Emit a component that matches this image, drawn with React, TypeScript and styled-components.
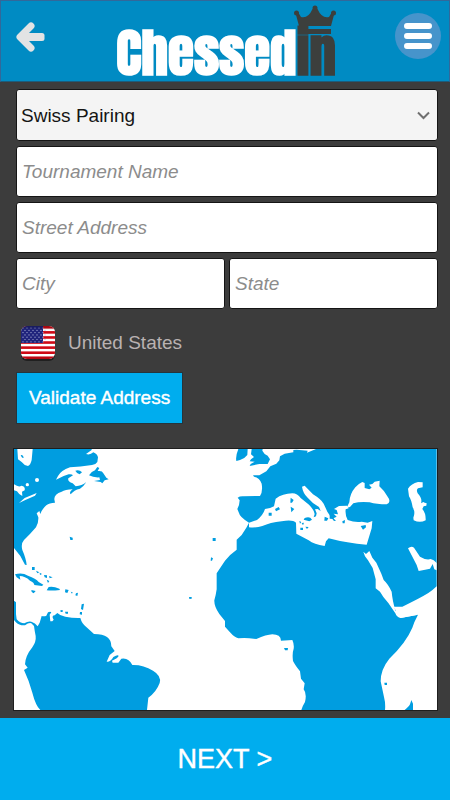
import React from "react";
import styled, { createGlobalStyle } from "styled-components";

const GlobalStyle = createGlobalStyle`
  *, *::before, *::after { box-sizing: border-box; }
  body { margin: 0; background: #3c3c3c; }
  button, input, select { font: inherit; }
`;

const Page = styled.div`
  min-height: 100vh;
  display: flex;
  flex-direction: column;
  background: #3c3c3c;
  font-family: "Liberation Sans", Arial, sans-serif;
  font-size: 19px;
`;

const Header = styled.header`
  display: flex;
  align-items: flex-start;
  justify-content: space-between;
  height: 82px;
  padding: 0 8px 0 12px;
  background: #008bc3;
  border: 1px solid #32689a;
  border-bottom-color: #1c5c7c;
`;

const IconButton = styled.button<{ $round?: boolean }>`
  display: grid;
  place-items: center;
  width: ${(p) => (p.$round ? 46 : 36)}px;
  height: 46px;
  margin-top: ${(p) => (p.$round ? 12 : 13)}px;
  padding: 0;
  border: 0;
  border-radius: ${(p) => (p.$round ? "50%" : "0")};
  background: ${(p) => (p.$round ? "#4694cb" : "transparent")};
  cursor: pointer;
`;

const Brand = styled.div`
  position: relative;
  height: 80px;
  margin-left: 8px;
  padding-top: 12px;
  font-family: Anton, Impact, "Roboto Condensed", sans-serif;
  font-weight: 700;
  font-size: 53px;
  line-height: 80px;
  white-space: nowrap;
  color: #fff;
`;

const BrandTail = styled.span`
  color: #3c3f3d;
`;

const Crown = styled.svg`
  position: absolute;
  top: 4px;
  right: 0;
`;

const Form = styled.form`
  flex: 1;
  display: flex;
  flex-direction: column;
  padding: 7px 12px 7px 16px;
`;

const Fields = styled.div`
  display: grid;
  grid-template-columns: 1fr 1fr;
  gap: 5px 4px;
`;

const fieldBox = `
  width: 100%;
  min-width: 0;
  height: 52px;
  border: 1px solid #151515;
  border-radius: 3px;
`;

const SelectWrap = styled.div`
  grid-column: 1 / -1;
  display: grid;
  align-items: center;

  & > * { grid-area: 1 / 1; }
  & > svg { justify-self: end; margin-right: 8px; pointer-events: none; }
`;

const Select = styled.select`
  ${fieldBox}
  appearance: none;
  padding: 0 32px 0 4px;
  background: #f4f4f4;
  color: #151515;
`;

const Field = styled.input<{ $wide?: boolean }>`
  ${fieldBox}
  height: 51px;
  grid-column: ${(p) => (p.$wide ? "1 / -1" : "auto")};
  padding: 0 5px;
  background: #fff;
  color: #222;

  &::placeholder { color: #8c8c8c; font-style: italic; opacity: 1; }
`;

const Country = styled.div`
  display: flex;
  align-items: center;
  gap: 12px;
  height: 36px;
  margin: 16px 0 11px 4px;
  color: #b9b2b2;
`;

const Validate = styled.button`
  align-self: flex-start;
  height: 52px;
  padding: 0 12px;
  border: 1px solid #26353c;
  background: #00adee;
  color: #fff;
  -webkit-text-stroke: 0.4px #fff;
  cursor: pointer;
`;

const MapFrame = styled.div`
  margin: 24px 0 0 -3px;
  border: 1px solid #1e1e1e;
  background: #fff;

  & > svg { display: block; width: 100%; height: auto; }
`;

const Next = styled.button`
  height: 82px;
  padding: 0;
  border: 0;
  background: #00adee;
  color: #fff;
  font-size: 27px;
  -webkit-text-stroke: 0.4px #fff;
  cursor: pointer;
`;

const LAND = "#009de0";

function Flag() {
  const stars = [];
  for (let r = 0; r < 7; r++) {
    for (let c = 0; c < 6; c++) {
      stars.push(<circle key={`${r}-${c}`} cx={3 + c * 4 + (r % 2) * 2} cy={3 + r * 2.3} r="0.6" fill="#b6bbdc" />);
    }
  }
  return (
    <svg width="36" height="36" viewBox="0 0 36 36" role="img" aria-label="Flag of the United States">
      <defs>
        <clipPath id="flag-shape"><rect x="1" y="1" width="34" height="33" rx="6" /></clipPath>
        <linearGradient id="flag-shade" x1="0" y1="0" x2="0" y2="1">
          <stop offset="0" stopColor="#000" stopOpacity="0.3" />
          <stop offset="0.15" stopColor="#000" stopOpacity="0" />
          <stop offset="0.85" stopColor="#000" stopOpacity="0" />
          <stop offset="1" stopColor="#000" stopOpacity="0.25" />
        </linearGradient>
      </defs>
      <rect x="1" y="3" width="34" height="33" rx="6" fill="#202020" />
      <g clipPath="url(#flag-shape)">
        <rect width="36" height="36" fill="#fff" />
        {[0, 1, 2, 3, 4, 5, 6].map((i) => (
          <rect key={i} y={1 + i * 5.08} width="36" height="2.6" fill="#cf0a16" />
        ))}
        <rect width="23" height="18" fill="#20247c" />
        {stars}
        <rect width="36" height="36" fill="url(#flag-shade)" />
      </g>
    </svg>
  );
}

function WorldMap() {
  return (
    <svg viewBox="42 1347 1269 783" role="img" aria-label="Map of the Atlantic Ocean">
      <g transform="translate(0 1320)" fill={LAND}>
        <path d="M42 27H275V30L258 42Q270 46 280 37Q292 42 294 52L292 66Q288 73 276 75Q240 80 210 82Q182 92 174 108L168 119Q188 108 206 103Q216 102 219 106L205 115Q202 124 218 130L227 139Q246 137 259 126Q252 138 240 146Q222 150 212 163Q206 156 218 148Q195 149 185 155Q162 162 163 178L165 188Q148 188 139 196Q126 207 121 222L118 213L110 220L115 232Q116 249 108 262Q92 281 72 300Q62 311 67 330Q78 355 80 375L75 374L61 348L42 324Z" />
        <path d="M267 106Q275 94 285 91L292 81L298 84L293 93Q307 91 310 100L319 113L326 118L314 121L307 130L302 126L282 123L300 120L298 112Q280 113 267 106Z" />
        <path d="M226 92Q238 88 246 97L239 103Q229 99 226 92Z" />
        <path d="M52 27H98L95 60Q91 76 84 78Q72 76 65 66L54 58Z" fill="#fff" />
        <path d="M62 45Q70 43 71 53Q65 56 62 45Z" />
        <g fill="#fff">
          <path d="M42 133Q57 143 64 137Q77 139 74 151L66 155L67 168Q56 163 51 154L42 151Z" />
          <path d="M57 189L74 174L110 159L105 167L76 180Z" />
          <circle cx="82" cy="134" r="5" /><circle cx="111" cy="120" r="6" />
        </g>
        <path d="M209 290L218 293V300H211Z" />
        <path d="M45 403Q67 397 84 407Q108 415 116 426L130 434L126 438L103 435Q103 428 90 422Q75 408 59 408L61 419L50 412Z" />
        <path d="M146 441Q160 438 178 446L180 450Q155 453 140 451ZM94 450L107 453L101 460L95 456ZM96 381H104V390H96ZM108 392L118 397L112 400ZM119 398L126 402L120 405ZM132 405L141 406V414L134 412ZM147 408L158 412L149 415ZM140 419L148 423L144 429ZM196 448L206 450L202 459L195 457ZM212 455L218 457L216 461ZM228 460L234 458L232 468L226 466ZM245 493L252 491L249 510L243 507ZM240 516H246V524L239 523ZM181 511L188 510V516H182ZM195 515H204V521H197Z" />
        <path d="M42 482L48 487V522L50 538Q60 550 73 550Q84 543 94 545Q106 549 113 559L119 548L125 528Q133 530 139 527L144 517Q151 513 154 517L149 524L151 544H157L161 539L158 533Q157 526 164 526L172 519Q181 528 196 530Q220 535 241 534Q246 552 258 560L282 582Q309 582 321 591Q334 600 334 619L344 633L329 645L320 665Q332 666 340 651Q354 643 356 648Q352 656 336 662L338 668H355L364 656Q386 652 397 675Q430 674 459 692Q485 707 479 729Q469 756 445 773L441 810H121Q107 797 97 758Q88 724 72 690L83 683L75 673Q76 648 97 622Q109 605 107 588Q104 573 102 558L94 550Q87 547 75 556Q57 557 47 546L42 540Z" />
        <path d="M567 471H575V476L568 477Z" />
      </g>
      <g transform="translate(600 1320)" fill={LAND}>
        <path d="M348 27L321 38L323 32L290 29L280 30V37L254 41L240 49L238 61L229 71L211 79L199 94L178 106L159 106L162 110Q179 113 185 131Q189 155 180 168Q151 168 131 169Q120 168 113 173L119 181L117 195L112 207L117 219Q119 231 147 248L139 263L125 285L110 299V329Q91 342 75 362L50 400V448Q48 463 43 481Q42 499 58 522L75 543V560L90 577Q103 592 115 595Q134 593 148 595L169 597Q199 584 217 583Q242 583 243 602L277 600Q283 613 281 626Q276 640 279 663Q285 675 300 694L303 716L314 730L311 748Q321 761 315 786Q308 797 304 810H555Q557 790 552 771L542 724Q542 688 568 656Q618 608 637 563L643 547L654 524L602 534L580 500L607 500Q661 474 685 459Q699 450 710 439V27Z" />
        <path d="M115 27H143L142 45Q134 56 120 60L109 63Q106 49 115 27ZM155 27H188L187 32Q193 44 203 47L210 58L203 72H178L149 78L152 72L164 65L149 64L153 58L162 51L153 43Z" />
        <path d="M38 294H47V303H38ZM33 352L39 355L36 362H32Z" />
        <g fill="#fff">
          <path d="M147 248L171 240Q189 226 195 207Q212 205 222 199L227 176Q248 161 277 160Q292 160 302 174L327 194Q342 209 344 222L341 232L348 229L350 220L345 208L353 207L362 213L357 201Q339 192 323 173Q309 160 306 140L314 137L339 163Q362 177 371 191L382 215L394 233L402 243L408 242L400 235L410 230L401 221L414 223L410 210L402 207L417 198L441 197L446 205L437 208Q435 227 443 240Q465 248 485 245L503 248L517 243L515 265L500 314Q442 310 386 295L378 304L374 318Q342 314 326 301L289 281L288 248Q278 238 245 244Q210 248 187 258Q170 264 147 262Z" />
          <path d="M440 203L448 187Q449 162 466 142Q477 130 487 126L494 129V144L508 148L515 143L507 134L517 132L524 125L539 122L538 139Q552 151 562 169Q576 187 560 193Q530 193 509 187Q480 184 460 190L450 201Z" />
          <path d="M624 146Q634 131 654 126L668 127V142L654 145Q648 149 653 160Q668 176 663 190L670 186L674 188L680 190L679 197L671 199L667 207Q678 220 677 241Q660 250 641 241L640 233Q647 217 638 202Q634 179 627 169Z" />
          <path d="M490 335L498 342L508 333L517 353L529 368L544 401L551 420Q564 432 575 455Q577 479 586 512L606 501L654 524L602 534Q591 533 586 520L565 489Q548 470 540 455L527 445V418L518 384L504 361L495 349Z" />
          <path d="M624 325Q634 317 642 323L660 350Q680 362 692 357L701 361L710 369V391L703 388L698 372L690 386Q670 390 656 393L650 375Z" />
        </g>
        <path d="M272 173L281 180L276 188H271ZM272 200L283 207L274 217ZM225 207L236 201L240 208L228 214ZM206 218H215V227H206ZM314 234Q330 228 336 239L328 244L311 239ZM298 243L304 246L300 251ZM305 249L312 248L309 256ZM301 263H309V270H301ZM316 260L326 261L321 267ZM374 230L385 235L381 242H373ZM389 224L403 230L400 237L389 236ZM427 244L435 240L434 250H428ZM482 258L497 255L498 262L489 269Z" />
        <path d="M252 624L264 624L263 631H255ZM553 728H561V735H554ZM614 810Q627 800 630 793L634 780L639 791V810Z" />
      </g>
    </svg>
  );
}

export default function App() {
  return (
    <>
      <GlobalStyle />
      <Page>
        <Header>
          <IconButton type="button" aria-label="Back">
            <svg width="34" height="34" viewBox="0 0 34 34" fill="none" stroke="#e2e3e4" strokeWidth="8" strokeLinecap="round" strokeLinejoin="round">
              <path d="M17 6 6 17 17 28" strokeWidth="7" />
              <path d="M7 17H28" strokeLinecap="butt" />
              <path d="M28 15.500V18.500" strokeWidth="5" />
            </svg>
          </IconButton>
          <Brand>
            Chessed<BrandTail>in</BrandTail>
            <Crown width="42" height="30" viewBox="0 0 42 30" fill="#3c3f3d" aria-hidden="true">
              <path d="M5 21 1.500 8 4 7 7 12Q14 14 18.500 4H23.500Q28 14 35 12L38 7 40.500 8 37 21ZM5 24H37V29H5Z" />
              <circle cx="2.500" cy="8" r="2.500" /><circle cx="21" cy="3" r="2.500" /><circle cx="39.500" cy="8" r="2.500" />
            </Crown>
          </Brand>
          <IconButton type="button" $round aria-label="Menu">
            <svg width="28" height="28" viewBox="0 0 28 28" stroke="#fff" strokeWidth="6" strokeLinecap="round">
              <path d="M3 4H25M3 14H25M3 24H25" />
            </svg>
          </IconButton>
        </Header>
        <Form onSubmit={(e) => e.preventDefault()}>
          <Fields>
            <SelectWrap>
              <Select aria-label="Pairing system" defaultValue="swiss">
                <option value="swiss">Swiss Pairing</option>
              </Select>
              <svg width="13" height="9" viewBox="0 0 13 9" fill="none" stroke="#6f6f6f" strokeWidth="2">
                <path d="M1 1.500 6.500 7 12 1.500" />
              </svg>
            </SelectWrap>
            <Field $wide aria-label="Tournament Name" placeholder="Tournament Name" />
            <Field $wide aria-label="Street Address" placeholder="Street Address" />
            <Field aria-label="City" placeholder="City" />
            <Field aria-label="State" placeholder="State" />
          </Fields>
          <Country>
            <Flag />
            <span>United States</span>
          </Country>
          <Validate type="button">Validate Address</Validate>
          <MapFrame>
            <WorldMap />
          </MapFrame>
        </Form>
        <Next type="button">NEXT &gt;</Next>
      </Page>
    </>
  );
}
